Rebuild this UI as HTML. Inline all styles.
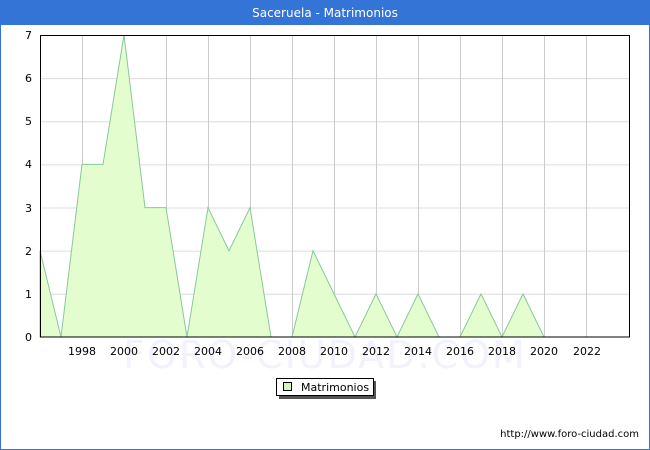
<!DOCTYPE html>
<html><head><meta charset="utf-8"><style>
html,body{margin:0;padding:0;width:650px;height:450px;overflow:hidden;background:#fff;font-family:"DejaVu Sans","Liberation Sans",sans-serif;}
</style></head><body>
<svg width="650" height="450" xmlns="http://www.w3.org/2000/svg" font-family="DejaVu Sans, Liberation Sans, sans-serif">
<rect x="0.5" y="0.5" width="649" height="449" fill="#fff" stroke="#3474d6"/>
<rect x="0" y="0" width="650" height="25" fill="#3474d6"/>
<text x="325" y="17" font-size="12" fill="#fff" text-anchor="middle">Saceruela - Matrimonios</text>
<text x="325" y="368" font-size="38" fill="#f2f2fc" text-anchor="middle" letter-spacing="2">FORO-CIUDAD.COM</text>
<g stroke="#dcdcdc" stroke-width="1">
<line x1="40" y1="78.6" x2="630" y2="78.6"/><line x1="40" y1="121.7" x2="630" y2="121.7"/>
<line x1="40" y1="164.9" x2="630" y2="164.9"/><line x1="40" y1="208" x2="630" y2="208"/>
<line x1="40" y1="251.1" x2="630" y2="251.1"/><line x1="40" y1="294.3" x2="630" y2="294.3"/>
</g>
<g stroke="#cccccc" stroke-width="1">
<line x1="82.5" y1="35" x2="82.5" y2="337"/><line x1="124.5" y1="35" x2="124.5" y2="337"/>
<line x1="166.5" y1="35" x2="166.5" y2="337"/><line x1="208.5" y1="35" x2="208.5" y2="337"/>
<line x1="250.5" y1="35" x2="250.5" y2="337"/><line x1="292.5" y1="35" x2="292.5" y2="337"/>
<line x1="334.5" y1="35" x2="334.5" y2="337"/><line x1="376.5" y1="35" x2="376.5" y2="337"/>
<line x1="418.5" y1="35" x2="418.5" y2="337"/><line x1="460.5" y1="35" x2="460.5" y2="337"/>
<line x1="502.5" y1="35" x2="502.5" y2="337"/><line x1="544.5" y1="35" x2="544.5" y2="337"/>
<line x1="586.5" y1="35" x2="586.5" y2="337"/>
</g>
<polygon fill="#e4fdcf" stroke="#86c99a" stroke-width="1" points="40,337 40,250.7 61,337 82,164.4 103,164.4 124,35 145,207.6 166,207.6 187,337 208,207.6 229,250.7 250,207.6 271,337 292,337 313,250.7 334,293.9 355,337 376,293.9 397,337 418,293.9 439,337 460,337 481,293.9 502,337 523,293.9 544,337"/>
<rect x="40.5" y="35.5" width="589" height="301.5" fill="none" stroke="#000" stroke-width="1"/>
<g font-size="11" fill="#000" text-anchor="end">
<text x="32" y="39">7</text><text x="32" y="82">6</text><text x="32" y="125">5</text>
<text x="32" y="168">4</text><text x="32" y="212">3</text><text x="32" y="255">2</text>
<text x="32" y="298">1</text><text x="32" y="341">0</text>
</g>
<g font-size="11" fill="#000" text-anchor="middle">
<text x="82" y="355">1998</text><text x="124" y="355">2000</text><text x="166" y="355">2002</text>
<text x="208" y="355">2004</text><text x="250" y="355">2006</text><text x="292" y="355">2008</text>
<text x="334" y="355">2010</text><text x="376" y="355">2012</text><text x="418" y="355">2014</text>
<text x="460" y="355">2016</text><text x="502" y="355">2018</text><text x="544" y="355">2020</text>
<text x="587" y="355">2022</text>
</g>
<rect x="279" y="381" width="97" height="18" fill="#555"/>
<rect x="276.5" y="378.5" width="97" height="17" fill="#fff" stroke="#000"/>
<rect x="283.5" y="382.5" width="8" height="8" fill="#d6f5b0" stroke="#000"/>
<text x="301" y="391" font-size="11" fill="#000">Matrimonios</text>
<text x="639" y="437" font-size="10" fill="#000" text-anchor="end">http://www.foro-ciudad.com</text>
</svg>
</body></html>
